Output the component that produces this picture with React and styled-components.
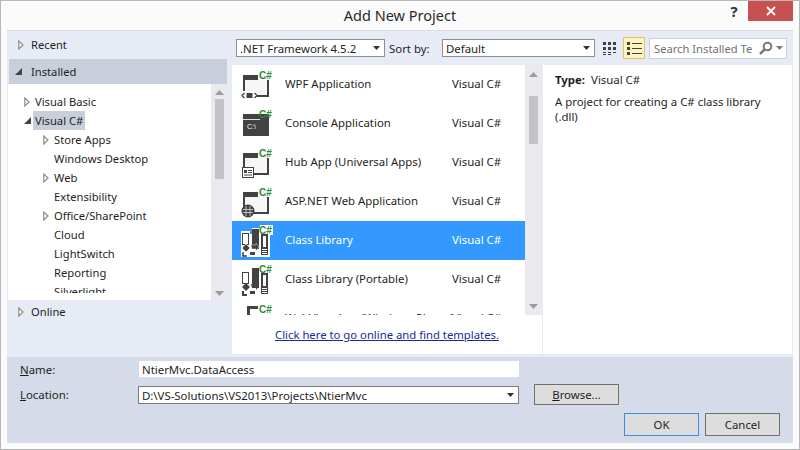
import React from "react";
import styled, { createGlobalStyle } from "styled-components";

const Global = createGlobalStyle`
  html, body { margin: 0; padding: 0; background: #fff; }
  * { box-sizing: border-box; }
`;

const Dialog = styled.div`
  width: 800px; height: 450px; overflow: hidden;
  border: 1px solid #b8b8b8;
  background: #fbfbfb;
  font-family: "Noto Sans", "Open Sans", sans-serif;
  font-size: 11.4px; color: #1e1e1e;
  display: flex; flex-direction: column;
`;
const TitleBar = styled.div`
  height: 29px; flex: none; position: relative;
  display: flex; align-items: center; justify-content: center;
`;
const Title = styled.div`
  font-size: 14.5px; color: #2a2a2a; margin-bottom: 1px;
`;
const TitleButtons = styled.div`
  position: absolute; right: 6px; top: 0; display: flex; align-items: flex-start;
`;
const Help = styled.div`
  width: 30px; text-align: center; font-weight: 700; font-size: 15px; color: #333; line-height: 20px; margin-right: -1px;
`;
const Close = styled.div`
  width: 45px; height: 20px; background: #c75050; color: #fff;
  display: flex; align-items: center; justify-content: center;
`;
const Panels = styled.div`
  margin: 0 6px; height: 327px; flex: none; display: flex; background: #e6ebf5;
  border-top: 1px solid #d6dbe6;
`;
const LeftCol = styled.div`
  width: 225px; flex: none; display: flex; flex-direction: column; padding-left: 1px;
`;
const Section = styled.div`
  height: ${p => p.$h}px; flex: none; display: flex; align-items: center; gap: ${p => p.$gap}px;
  padding-left: ${p => p.$pad}px; font-size: 11.2px; padding-bottom: 1px;
  margin-left: ${p => p.$ml || 0}px; width: ${p => p.$w || 218}px;
  background: ${p => (p.$active ? "#c9cedb" : "transparent")};
`;
const TreeWrap = styled.div`
  height: 216px; width: 219px; flex: none; display: flex;
`;
const Tree = styled.div`
  width: 203px; height: 100%; background: #fff; padding-top: 8px; overflow: hidden;
  display: flex; flex-direction: column; font-size: 11.2px;
`;
const TreeClip = styled.div`
  height: 201px; overflow: hidden;
`;
const TreeRow = styled.div`
  height: 19px; display: flex; align-items: center; padding-left: ${p => p.$indent}px;
`;
const ArrowSlot = styled.span`
  width: 8px; height: 19px; display: flex; align-items: center; margin-right: 1px;
`;
const TreeLabel = styled.span`
  height: 19px; line-height: 19px; padding: 0 2px; white-space: nowrap;
  background: ${p => (p.$active ? "#c9cedb" : "transparent")};
`;
const ScrollBar = styled.div`
  width: ${p => p.$w}px; height: 100%; flex: none; background: #eaeaee;
  display: flex; flex-direction: column; align-items: center; justify-content: space-between;
  padding-top: ${p => p.$pt}px; padding-bottom: ${p => p.$pb}px;
`;
const ScrollTop = styled.div`
  display: flex; flex-direction: column; align-items: center; gap: ${p => p.$gap}px;
`;
const Thumb = styled.div`
  width: 9px; height: ${p => p.$h}px; background: #c2c3c9;
`;
const CenterCol = styled.div`
  flex: 1; display: flex; flex-direction: column; min-width: 0;
`;
const Toolbar = styled.div`
  height: 34px; flex: none; display: flex; align-items: center; padding-left: 4px;
`;
const Combo = styled.div`
  width: ${p => p.$w}px; height: 18px; flex: none; background: #fff; border: 1px solid #8e8f92;
  display: flex; align-items: center; justify-content: space-between;
  padding: 0 4px 0 3px; white-space: nowrap;
`;
const SortLabel = styled.span`
  margin: 0 5px 0 4px; white-space: nowrap; width: 48px;
`;
const ViewIcon = styled.div`
  width: 22px; height: 22px; flex: none; display: flex; align-items: center; justify-content: center;
  margin-left: ${p => p.$ml}px;
  border: 1px solid ${p => (p.$active ? "#e5c365" : "transparent")};
  background: ${p => (p.$active ? "#fdf4bf" : "transparent")};
`;
const Search = styled.div`
  width: 138px; height: 21px; flex: none; margin-left: 4px; background: #fff; border: 1px solid #cdd0d8;
  display: flex; align-items: center; padding: 0 3px 0 4px; overflow: hidden;
  color: #717171; font-size: 11.2px;
`;
const SearchText = styled.span`
  flex: none; width: 98px; margin-right: 7px; overflow: hidden; white-space: nowrap;
`;
const SearchCaret = styled.span`
  margin-left: 3px; display: flex;
`;
const Content = styled.div`
  height: 289px; flex: none; display: flex; margin-right: 1px;
`;
const ListCol = styled.div`
  width: 310px; flex: none; background: #fff; display: flex; flex-direction: column;
`;
const ListArea = styled.div`
  height: 250px; flex: none; display: flex;
`;
const List = styled.div`
  width: 293px; height: 100%; overflow: hidden;
`;
const Row = styled.div`
  height: 39px; display: flex; align-items: center;
  background: ${p => (p.$selected ? "#3399ff" : "transparent")};
  color: ${p => (p.$selected ? "#fff" : "#1e1e1e")};
`;
const IconBox = styled.div`
  width: 32px; height: 32px; margin-left: 9px; flex: none;
`;
const RowName = styled.span`
  margin-left: 12px; width: 167px; flex: none; white-space: nowrap; padding-bottom: 2px;
`;
const RowLang = styled.span`
  white-space: nowrap; padding-bottom: 2px;
`;
const LinkBar = styled.div`
  flex: 1; display: flex; align-items: center; justify-content: center;
`;
const Link = styled.a`
  color: #1a2a9c; text-decoration: underline; font-size: 11.3px;
`;
const Details = styled.div`
  flex: 1; margin-left: 1px; background: #fff; padding: 7px 12px 0;
`;
const TypeLine = styled.div`
  display: flex; gap: 6px; line-height: 16px;
`;
const Bold = styled.b`
  font-weight: 700;
`;
const Desc = styled.div`
  margin-top: 7px; width: 225px; line-height: 14.5px;
`;
const Bottom = styled.div`
  margin: 0 6px; height: 86px; flex: none; background: #d6dbe9; position: relative;
  padding: 4px 0 0 13px;
  display: grid; grid-template-columns: 118px 381px 15px 85px; grid-template-rows: 17px 8px 17px; align-content: start;
`;
const FormLabel = styled.label`
  display: flex; align-items: center; grid-column: 1;
`;
const NameInput = styled.div`
  height: 16px; background: #fff; padding-left: 3px; display: flex; align-items: center; margin-left: 1px;
  grid-column: 2 / span 1;
`;
const LocationCombo = styled.div`
  height: 18px; background: #fff; border: 1px solid #7a7a7a; padding: 0 4px 0 3px; white-space: nowrap;
  display: flex; align-items: center; justify-content: space-between; grid-column: 2;
`;
const FormGap = styled.div`
  grid-column: 1 / -1;
`;
const Spacer = styled.div`
  grid-column: 3;
`;
const Button = styled.div`
  width: ${p => p.$w}px; height: ${p => p.$h}px; background: #dddddd; flex: none;
  border: 1px solid ${p => (p.$primary ? "#3a8ee6" : "#707070")};
  display: flex; align-items: center; justify-content: center;
`;
const BrowseCell = styled.div`
  grid-column: 4; height: 17px; display: flex; align-items: center;
`;
const Actions = styled.div`
  position: absolute; right: 13px; bottom: 7px; display: flex; gap: 6px;
`;

const Caret = () => (
  <svg width="7" height="4" viewBox="0 0 7 4"><path d="M0 0h7L3.500 4z" fill="#333" /></svg>
);
const Hollow = () => (
  <svg width="6" height="10" viewBox="0 0 6 10"><path d="M.8 1v8L5 5z" fill="#fff" stroke="#8c8c8c" strokeWidth="1.200" /></svg>
);
const Filled = () => (
  <svg width="7" height="7" viewBox="0 0 7 7"><path d="M7 0v7H0z" fill="#444" /></svg>
);
const Up = () => (
  <svg width="9" height="5" viewBox="0 0 9 5"><path d="M0 5L4.500 0 9 5z" fill="#9a9ba3" /></svg>
);
const Down = () => (
  <svg width="9" height="5" viewBox="0 0 9 5"><path d="M0 0h9L4.500 5z" fill="#9a9ba3" /></svg>
);

const DARK = "#424242";
const CS = ({ x = 18, y = 9.500 }) => (
  <text x={x} y={y} fontFamily="Liberation Sans, sans-serif" fontSize="10" fontWeight="700" fill="#2f8a34">C#</text>
);
const Frame = () => (
  <>
    <rect x="2" y="6" width="26" height="22" fill="#f6f6f6" />
    <path d="M2 6h15v5H4v13H2zM26 11h2v17H10v-2h16z" fill={DARK} />
  </>
);
const Wpf = () => (
  <svg width="32" height="32" viewBox="0 0 32 32">
    <Frame />
    <rect x="1" y="22" width="15" height="9" fill="#fff" />
    <path d="M3.500 24L1 26.500 3.500 29M13.500 24L16 26.500 13.500 29" fill="none" stroke={DARK} strokeWidth="1.300" />
    <rect x="5.500" y="24" width="6" height="5" fill={DARK} />
    <CS />
  </svg>
);
const Console = () => (
  <svg width="32" height="32" viewBox="0 0 32 32">
    <rect x="2" y="6" width="26" height="22" fill={DARK} />
    <rect x="2" y="11" width="17" height="1" fill="#ddd" />
    <text x="6" y="21" fontFamily="Liberation Sans, sans-serif" fontSize="7" fill="#fff">C:\</text>
    <CS />
  </svg>
);
const Hub = () => (
  <svg width="32" height="32" viewBox="0 0 32 32">
    <Frame />
    <rect x="1.500" y="20.500" width="11" height="10" fill="#fff" stroke={DARK} />
    <rect x="3" y="23" width="3" height="3" fill={DARK} />
    <path d="M7 23.500h4M7 25.500h4M3 28h8" stroke={DARK} />
    <CS />
  </svg>
);
const Asp = () => (
  <svg width="32" height="32" viewBox="0 0 32 32">
    <Frame />
    <circle cx="7" cy="25" r="6.500" fill={DARK} />
    <path d="M2 23.500h10M2 26.500h10M5 20v10M9 20v10" stroke="#ddd" strokeWidth=".8" />
    <CS />
  </svg>
);
const Lib = ({ selected }) => {
  const halo = selected ? "#fff" : "none";
  return (
    <svg width="32" height="32" viewBox="0 0 32 32">
      {selected && <path d="M0 6h9v3h2V3h8v-3h13v10h-3v22H0z" fill="#fff" />}
      <rect x="1.500" y="8.500" width="6" height="11" fill="#fff" stroke={DARK} />
      <rect x="11" y="4" width="7" height="20" fill={DARK} />
      <rect x="20" y="9" width="7" height="21" fill={DARK} />
      <rect x="22" y="11" width="3" height="11" fill="#fff" />
      <path d="M21 24.500h5M21 26.500h5M21 28.500h5" stroke="#fff" />
      <path d="M1 23l4-4 4 4-4 4z" fill={DARK} stroke={halo} strokeWidth=".6" />
      <path d="M10 20h5v-2l3 4-3 4v-2h-4zM1 27h2v3h3v2H1z" fill={DARK} stroke={halo} strokeWidth=".4" />
      <path d="M9 27h5v3H9z" fill={DARK} />
      <CS x={18} y={9} />
    </svg>
  );
};
const WebView = () => (
  <svg width="32" height="32" viewBox="0 0 32 32">
    <path d="M6 3h11v3H9v8H6z" fill={DARK} />
    <rect x="21" y="12" width="2" height="2" fill={DARK} />
    <CS />
  </svg>
);

const templates = [
  { name: "WPF Application", Icon: Wpf },
  { name: "Console Application", Icon: Console },
  { name: "Hub App (Universal Apps)", Icon: Hub },
  { name: "ASP.NET Web Application", Icon: Asp },
  { name: "Class Library", Icon: Lib, selected: true },
  { name: "Class Library (Portable)", Icon: Lib },
  { name: "WebView App (Windows Phone)", Icon: WebView },
];

const tree = [
  { label: "Visual Basic", level: 1, arrow: "hollow" },
  { label: "Visual C#", level: 1, arrow: "filled", active: true },
  { label: "Store Apps", level: 2, arrow: "hollow" },
  { label: "Windows Desktop", level: 2 },
  { label: "Web", level: 2, arrow: "hollow" },
  { label: "Extensibility", level: 2 },
  { label: "Office/SharePoint", level: 2, arrow: "hollow" },
  { label: "Cloud", level: 2 },
  { label: "LightSwitch", level: 2 },
  { label: "Reporting", level: 2 },
  { label: "Silverlight", level: 2 },
];

export default function App() {
  return (
    <>
      <Global />
      <Dialog>
        <TitleBar>
          <Title>Add New Project</Title>
          <TitleButtons>
            <Help>?</Help>
            <Close>
              <svg width="10" height="10" viewBox="0 0 10 10"><path d="M1 1l8 8M9 1l-8 8" stroke="#fff" strokeWidth="1.800" /></svg>
            </Close>
          </TitleButtons>
        </TitleBar>
        <Panels>
          <LeftCol>
            <Section $h={28} $pad={10} $gap={7}><Hollow /><span>Recent</span></Section>
            <Section $h={25} $pad={6} $gap={9} $ml={1} $active><Filled /><span>Installed</span></Section>
            <TreeWrap>
              <Tree>
                <TreeClip>
                  {tree.map(t => (
                    <TreeRow key={t.label} $indent={t.level === 1 ? 16 : 35}>
                      <ArrowSlot>
                        {t.arrow === "hollow" && <Hollow />}
                        {t.arrow === "filled" && <Filled />}
                      </ArrowSlot>
                      <TreeLabel $active={t.active}>{t.label}</TreeLabel>
                    </TreeRow>
                  ))}
                </TreeClip>
              </Tree>
              <ScrollBar $w={16} $pt={6} $pb={4}>
                <ScrollTop $gap={4}><Up /><Thumb $h={80} /></ScrollTop>
                <Down />
              </ScrollBar>
            </TreeWrap>
            <Section $h={24} $pad={10} $gap={7}><Hollow /><span>Online</span></Section>
          </LeftCol>
          <CenterCol>
            <Toolbar>
              <Combo $w={149}><span>.NET Framework 4.5.2</span><Caret /></Combo>
              <SortLabel>Sort by:</SortLabel>
              <Combo $w={153}><span>Default</span><Caret /></Combo>
              <ViewIcon $ml={4}>
                <svg width="15" height="15" viewBox="0 0 15 15" fill={DARK}>
                  <path d="M0 1h3v3H0zM5 1h3v3H5zM10 1h3v3h-3zM0 6h3v3H0zM5 6h3v3H5zM10 6h3v3h-3zM0 11h3v1H0zM5 11h3v1H5zM10 11h3v1h-3zM0 13h3v1H0zM5 13h3v1H5z" />
                </svg>
              </ViewIcon>
              <ViewIcon $ml={2} $active>
                <svg width="15" height="13" viewBox="0 0 15 13" fill={DARK}>
                  <path d="M0 0h3v3H0zM5 1h10v1H5zM0 5h3v3H0zM5 6h10v1H5zM0 10h3v3H0zM5 11h10v1H5z" />
                </svg>
              </ViewIcon>
              <Search>
                <SearchText>Search Installed Templates</SearchText>
                <svg width="14" height="14" viewBox="0 0 14 14"><circle cx="8.500" cy="5.500" r="3.800" fill="none" stroke="#7a7a7a" strokeWidth="2" /><path d="M6 8l-5 5" stroke="#7a7a7a" strokeWidth="2.500" /></svg>
                <SearchCaret><svg width="7" height="4" viewBox="0 0 7 4"><path d="M0 0h7L3.500 4z" fill="#7a7a7a" /></svg></SearchCaret>
              </Search>
            </Toolbar>
            <Content>
              <ListCol>
                <ListArea>
                  <List>
                    {templates.map(({ name, Icon, selected }) => (
                      <Row key={name} $selected={selected}>
                        <IconBox><Icon selected={selected} /></IconBox>
                        <RowName>{name}</RowName>
                        <RowLang>Visual C#</RowLang>
                      </Row>
                    ))}
                  </List>
                  <ScrollBar $w={17} $pt={7} $pb={6}>
                    <ScrollTop $gap={19}><Up /><Thumb $h={48} /></ScrollTop>
                    <Down />
                  </ScrollBar>
                </ListArea>
                <LinkBar><Link href="#">Click here to go online and find templates.</Link></LinkBar>
              </ListCol>
              <Details>
                <TypeLine><Bold>Type:</Bold><span>Visual C#</span></TypeLine>
                <Desc>A project for creating a C# class library (.dll)</Desc>
              </Details>
            </Content>
          </CenterCol>
        </Panels>
        <Bottom>
          <FormLabel><span><u>N</u>ame:</span></FormLabel>
          <NameInput>NtierMvc.DataAccess</NameInput>
          <FormGap />
          <FormLabel><span><u>L</u>ocation:</span></FormLabel>
          <LocationCombo><span>D:\VS-Solutions\VS2013\Projects\NtierMvc</span><Caret /></LocationCombo>
          <Spacer />
          <BrowseCell><Button $w={85} $h={21}><span><u>B</u>rowse...</span></Button></BrowseCell>
          <Actions>
            <Button $w={75} $h={23} $primary>OK</Button>
            <Button $w={75} $h={23}>Cancel</Button>
          </Actions>
        </Bottom>
      </Dialog>
    </>
  );
}
